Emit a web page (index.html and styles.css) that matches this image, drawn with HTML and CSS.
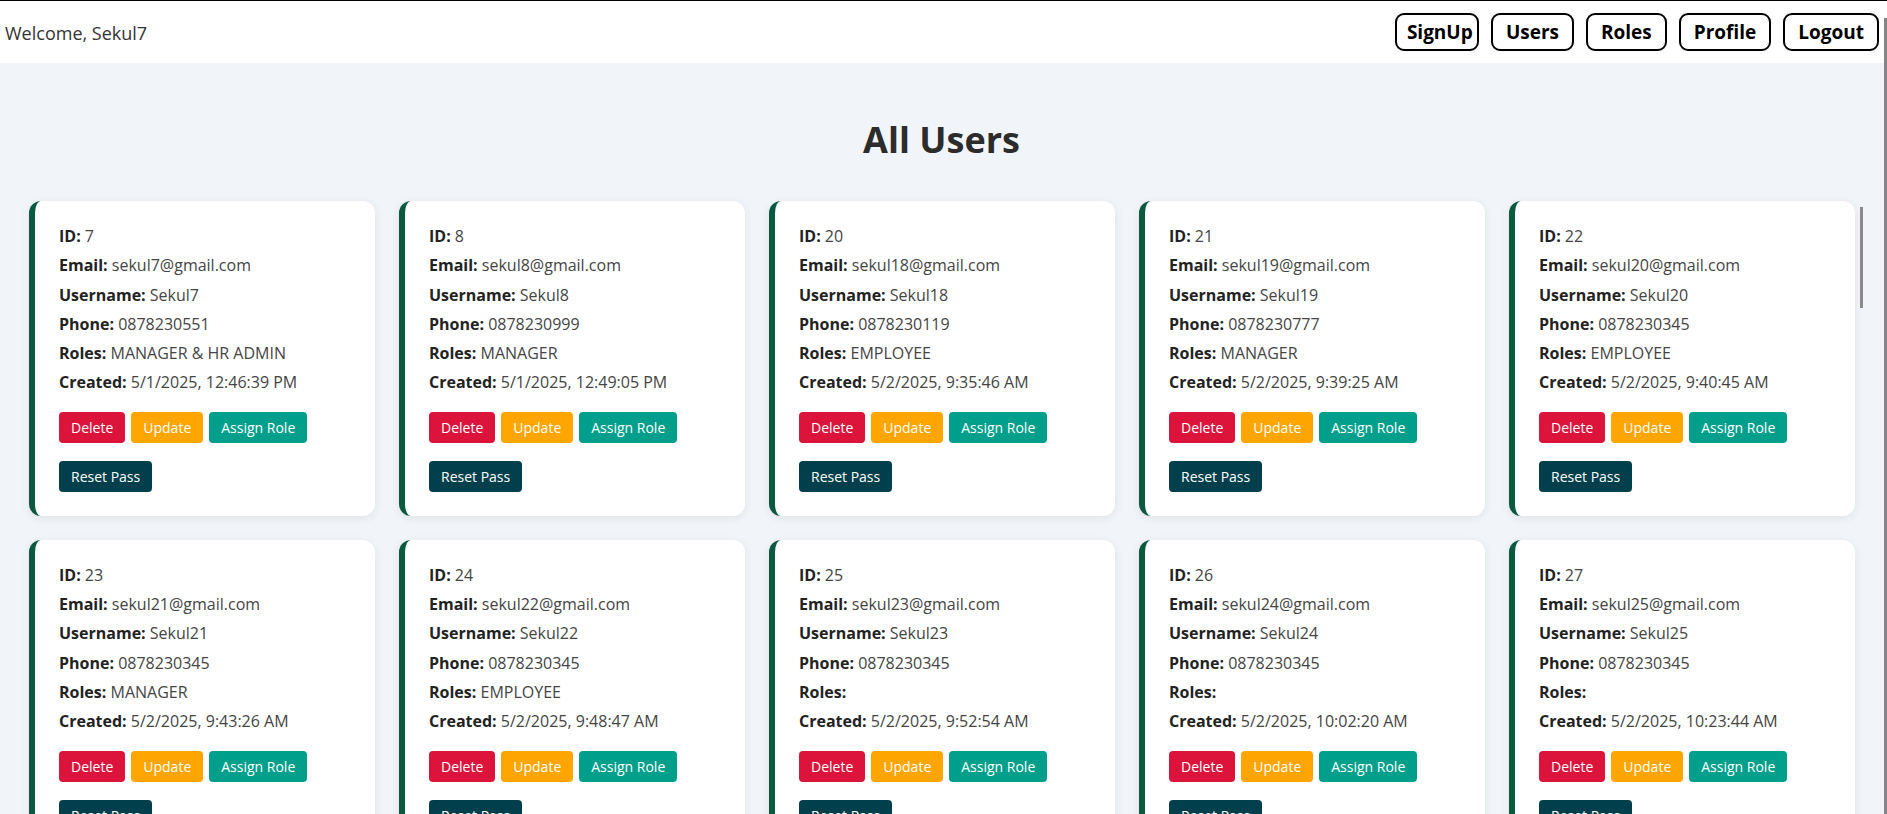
FILE: index.html
```html
<!DOCTYPE html>
<html lang="en">
<head>
<meta charset="utf-8">
<title>All Users</title>
<link rel="stylesheet" href="styles.css">
</head>
<body>
<header class="topbar">
  <span class="welcome">Welcome, Sekul7</span>
  <nav class="nav">
    <button class="nav-btn nav-btn--tight">SignUp</button>
    <button class="nav-btn">Users</button>
    <button class="nav-btn">Roles</button>
    <button class="nav-btn">Profile</button>
    <button class="nav-btn">Logout</button>
  </nav>
</header>
<main class="page">
  <h1 class="title">All Users</h1>
  <div class="board-wrap">
    <section class="board">
      <div class="grid">
        <article class="card">
          <p><b>ID:</b> 7</p>
          <p><b>Email:</b> sekul7@gmail.com</p>
          <p><b>Username:</b> Sekul7</p>
          <p><b>Phone:</b> 0878230551</p>
          <p><b>Roles:</b> MANAGER &amp; HR ADMIN</p>
          <p><b>Created:</b> 5/1/2025, 12:46:39 PM</p>
          <div class="actions"><button class="btn btn-delete">Delete</button><button class="btn btn-update">Update</button><button class="btn btn-assign">Assign Role</button><button class="btn btn-reset">Reset Pass</button></div>
        </article>
        <article class="card">
          <p><b>ID:</b> 8</p>
          <p><b>Email:</b> sekul8@gmail.com</p>
          <p><b>Username:</b> Sekul8</p>
          <p><b>Phone:</b> 0878230999</p>
          <p><b>Roles:</b> MANAGER</p>
          <p><b>Created:</b> 5/1/2025, 12:49:05 PM</p>
          <div class="actions"><button class="btn btn-delete">Delete</button><button class="btn btn-update">Update</button><button class="btn btn-assign">Assign Role</button><button class="btn btn-reset">Reset Pass</button></div>
        </article>
        <article class="card">
          <p><b>ID:</b> 20</p>
          <p><b>Email:</b> sekul18@gmail.com</p>
          <p><b>Username:</b> Sekul18</p>
          <p><b>Phone:</b> 0878230119</p>
          <p><b>Roles:</b> EMPLOYEE</p>
          <p><b>Created:</b> 5/2/2025, 9:35:46 AM</p>
          <div class="actions"><button class="btn btn-delete">Delete</button><button class="btn btn-update">Update</button><button class="btn btn-assign">Assign Role</button><button class="btn btn-reset">Reset Pass</button></div>
        </article>
        <article class="card">
          <p><b>ID:</b> 21</p>
          <p><b>Email:</b> sekul19@gmail.com</p>
          <p><b>Username:</b> Sekul19</p>
          <p><b>Phone:</b> 0878230777</p>
          <p><b>Roles:</b> MANAGER</p>
          <p><b>Created:</b> 5/2/2025, 9:39:25 AM</p>
          <div class="actions"><button class="btn btn-delete">Delete</button><button class="btn btn-update">Update</button><button class="btn btn-assign">Assign Role</button><button class="btn btn-reset">Reset Pass</button></div>
        </article>
        <article class="card">
          <p><b>ID:</b> 22</p>
          <p><b>Email:</b> sekul20@gmail.com</p>
          <p><b>Username:</b> Sekul20</p>
          <p><b>Phone:</b> 0878230345</p>
          <p><b>Roles:</b> EMPLOYEE</p>
          <p><b>Created:</b> 5/2/2025, 9:40:45 AM</p>
          <div class="actions"><button class="btn btn-delete">Delete</button><button class="btn btn-update">Update</button><button class="btn btn-assign">Assign Role</button><button class="btn btn-reset">Reset Pass</button></div>
        </article>
        <article class="card">
          <p><b>ID:</b> 23</p>
          <p><b>Email:</b> sekul21@gmail.com</p>
          <p><b>Username:</b> Sekul21</p>
          <p><b>Phone:</b> 0878230345</p>
          <p><b>Roles:</b> MANAGER</p>
          <p><b>Created:</b> 5/2/2025, 9:43:26 AM</p>
          <div class="actions"><button class="btn btn-delete">Delete</button><button class="btn btn-update">Update</button><button class="btn btn-assign">Assign Role</button><button class="btn btn-reset">Reset Pass</button></div>
        </article>
        <article class="card">
          <p><b>ID:</b> 24</p>
          <p><b>Email:</b> sekul22@gmail.com</p>
          <p><b>Username:</b> Sekul22</p>
          <p><b>Phone:</b> 0878230345</p>
          <p><b>Roles:</b> EMPLOYEE</p>
          <p><b>Created:</b> 5/2/2025, 9:48:47 AM</p>
          <div class="actions"><button class="btn btn-delete">Delete</button><button class="btn btn-update">Update</button><button class="btn btn-assign">Assign Role</button><button class="btn btn-reset">Reset Pass</button></div>
        </article>
        <article class="card">
          <p><b>ID:</b> 25</p>
          <p><b>Email:</b> sekul23@gmail.com</p>
          <p><b>Username:</b> Sekul23</p>
          <p><b>Phone:</b> 0878230345</p>
          <p><b>Roles:</b> </p>
          <p><b>Created:</b> 5/2/2025, 9:52:54 AM</p>
          <div class="actions"><button class="btn btn-delete">Delete</button><button class="btn btn-update">Update</button><button class="btn btn-assign">Assign Role</button><button class="btn btn-reset">Reset Pass</button></div>
        </article>
        <article class="card">
          <p><b>ID:</b> 26</p>
          <p><b>Email:</b> sekul24@gmail.com</p>
          <p><b>Username:</b> Sekul24</p>
          <p><b>Phone:</b> 0878230345</p>
          <p><b>Roles:</b> </p>
          <p><b>Created:</b> 5/2/2025, 10:02:20 AM</p>
          <div class="actions"><button class="btn btn-delete">Delete</button><button class="btn btn-update">Update</button><button class="btn btn-assign">Assign Role</button><button class="btn btn-reset">Reset Pass</button></div>
        </article>
        <article class="card">
          <p><b>ID:</b> 27</p>
          <p><b>Email:</b> sekul25@gmail.com</p>
          <p><b>Username:</b> Sekul25</p>
          <p><b>Phone:</b> 0878230345</p>
          <p><b>Roles:</b> </p>
          <p><b>Created:</b> 5/2/2025, 10:23:44 AM</p>
          <div class="actions"><button class="btn btn-delete">Delete</button><button class="btn btn-update">Update</button><button class="btn btn-assign">Assign Role</button><button class="btn btn-reset">Reset Pass</button></div>
        </article>
      </div>
    </section>
    <span class="board-thumb" aria-hidden="true"></span>
  </div>
</main>
<span class="page-thumb" aria-hidden="true"></span>
</body>
</html>
```

FILE: styles.css
```css
* {
  box-sizing: border-box;
}

body {
  margin: 0;
  background: #f1f4f8;
  font-family: "Open Sans", "Noto Sans", "Liberation Sans", sans-serif;
  color: #444;
  overflow: hidden;
}

.topbar {
  display: flex;
  justify-content: space-between;
  align-items: center;
  height: 63px;
  border-top: 1px solid #000;
  background: #fff;
  padding: 0 8px 0 5px;
}

.welcome {
  font-size: 18px;
  color: #333;
  padding-top: 2px;
}

.nav {
  display: flex;
  gap: 12px;
}

.nav-btn {
  font-family: inherit;
  font-weight: 700;
  font-size: 19px;
  line-height: 26px;
  color: #000;
  background: #fff;
  border: 2px solid #000;
  border-radius: 9px;
  padding: 4px 13px;
  white-space: nowrap;
}

.nav-btn--tight {
  width: 84px;
  padding-left: 10px;
  padding-right: 0;
  text-align: left;
}

.page {
  padding-right: 4px;
}

.title {
  margin: 53px 0 31px;
  font-size: 36px;
  line-height: 48px;
  font-weight: 700;
  color: #2c2c2c;
  text-align: center;
}

.board-wrap {
  position: relative;
  margin: 0 19px 0 20px;
}

.board {
  padding: 6px 9px 10px 9px;
  height: 630px;
  overflow: hidden;
}

.board-thumb {
  position: absolute;
  top: 12px;
  right: 1px;
  width: 3px;
  height: 101px;
  background: #8a8a8a;
}

.page-thumb {
  position: fixed;
  top: 18px;
  right: 0;
  bottom: 0;
  width: 3px;
  background: #858585;
}

.grid {
  display: grid;
  grid-template-columns: repeat(5, 1fr);
  gap: 24px;
}

.card {
  background: #fff;
  border-left: 6px solid #0b5a40;
  border-radius: 12px;
  box-shadow: 0 2px 10px rgba(0, 0, 0, 0.08);
  padding: 17px 20px 24px 24px;
}

.card p {
  margin: 8px 0;
  font-size: 16px;
  line-height: 21.3px;
  color: #444;
}

.card b {
  color: #222;
  font-weight: 700;
}

.actions {
  display: flex;
  flex-wrap: wrap;
  gap: 18px 6px;
  margin-top: 18px;
}

.btn {
  font-family: inherit;
  font-size: 14px;
  line-height: 19px;
  color: #fff;
  border: none;
  border-radius: 4px;
  padding: 6px 12px;
}

.btn-delete { background: #dc143c; }
.btn-update { background: #ffa500; }
.btn-assign { background: #009f8b; }
.btn-reset { background: #023f4c; }
```
